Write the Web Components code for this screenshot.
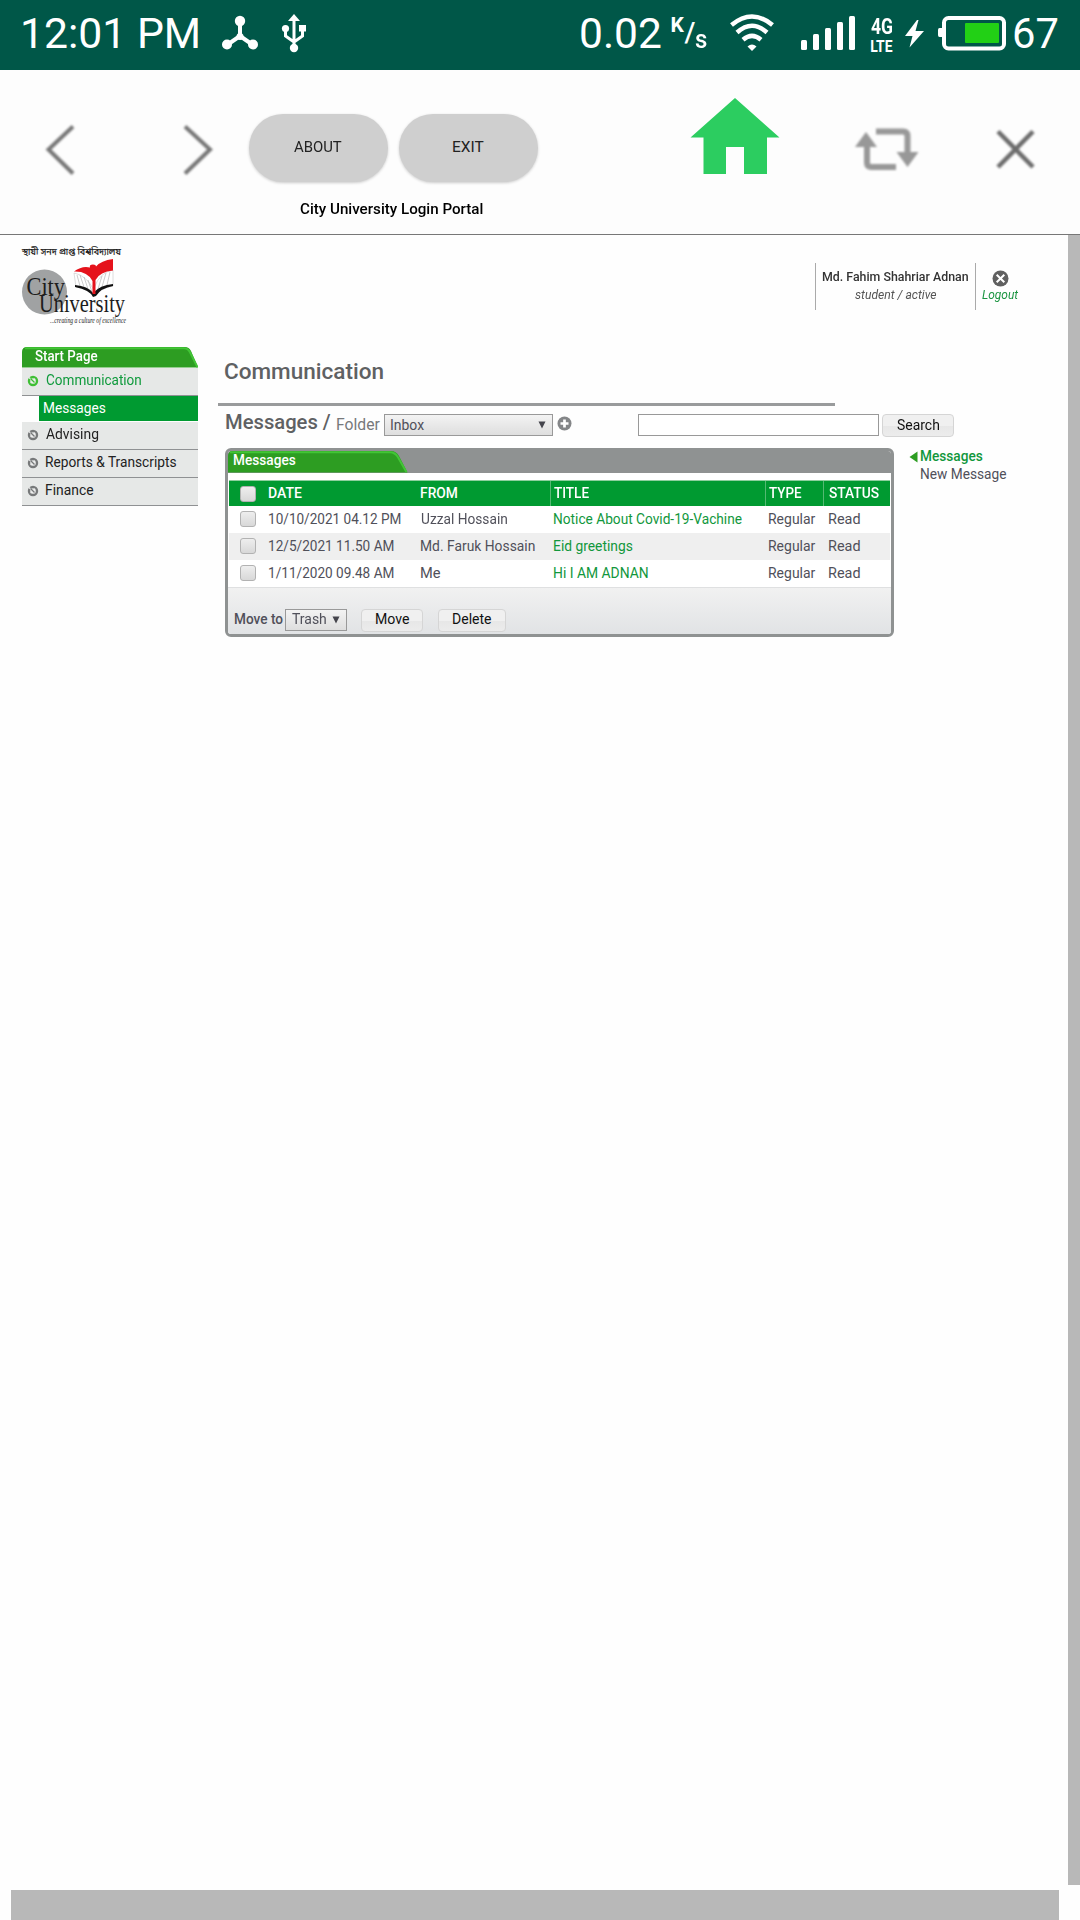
<!DOCTYPE html>
<html lang="en">
<head>
<meta charset="utf-8">
<title>City University Login Portal</title>
<style>
html,body{margin:0;padding:0;background:#fefefe}
body{width:1080px;height:1920px;overflow:hidden;font-family:Roboto,"Liberation Sans",sans-serif;color:#50505a}
</style>
</head>
<body>
<portal-app></portal-app>
<script>
const define=(name,markup,setup)=>{
  const t=document.createElement('template');
  t.innerHTML=markup;
  customElements.define(name,class extends HTMLElement{
    constructor(){super();this.attachShadow({mode:'open'}).append(t.content.cloneNode(true));}
    connectedCallback(){if(setup)setup(this,this.shadowRoot);}
  });
};
const pen=document.createElement('canvas').getContext('2d');

/* One line of text whose visible glyphs span exactly `w` pixels. */
define('fit-text',`<style>
:host{display:block;flex:none;white-space:nowrap;overflow:visible}
span{display:inline-block;transform-origin:0 50%;line-height:inherit;vertical-align:top}
</style><span><slot></slot></span>`,(el,root)=>{
  const w=+el.getAttribute('w');
  el.style.width=w+'px';
  el.style.fontSize=el.getAttribute('s')+'px';
  const lh=el.getAttribute('lh')||20;
  el.style.lineHeight=lh+'px';el.style.height=lh+'px';
  const cs=getComputedStyle(el);
  pen.font=`${cs.fontStyle} ${cs.fontWeight} ${cs.fontSize} ${cs.fontFamily}`;
  const m=pen.measureText(el.textContent.trim());
  const k=w/(m.actualBoundingBoxLeft+m.actualBoundingBoxRight);
  root.querySelector('span').style.transform=`translateX(${m.actualBoundingBoxLeft*k}px) scaleX(${k})`;
});

define('status-bar',`<style>
:host{display:flex;height:70px;box-sizing:border-box;padding-left:23px;background:#005748;color:#fff;align-items:flex-start}
svg{display:block;flex:none}
.net{display:flex;margin-left:264.5px;width:150px}
.rate{display:flex;margin-left:11px;font-weight:500}
.lte{display:flex;flex-direction:column;margin:18px 13px 0 0;gap:0;font-weight:700}
</style>
<fit-text w="175" s="42.5" lh="67">12:01 PM</fit-text>
<svg style="margin-left:22px" width="96" height="70" viewBox="220 0 96 70" fill="#fff" stroke="#fff">
<path d="M240 21v16.500M240 36l-13 9M240 36l13 9" stroke-width="4" fill="none"/><g stroke="none"><circle cx="240" cy="21" r="5.200"/><circle cx="227" cy="44.500" r="5"/><circle cx="253" cy="44.500" r="5"/><circle cx="240" cy="36.500" r="3.500"/>
<path d="M294 14l6 7h-12z"/><circle cx="294" cy="48" r="4.200"/><circle cx="285.500" cy="28.500" r="3.600"/><path d="M299 25h7v6.500h-7z"/></g>
<path d="M294 19v29M285.500 29v7l8.500 6M302.500 30v6l-8.500 6" fill="none" stroke-width="3"/></svg>
<div class="net"><fit-text w="80" s="42.5" lh="67">0.02</fit-text>
<div class="rate"><fit-text w="13" s="21" lh="50" style="font-weight:700">K</fit-text><fit-text w="11" s="28" lh="65">/</fit-text><fit-text w="12" s="26" lh="79" style="margin-left:-1px">s</fit-text></div></div>
<svg style="margin-left:-1px" width="141" height="70" viewBox="730 0 141 70" fill="none" stroke="#fff" stroke-width="4.500">
<path d="M731.500 25Q752 8 772.500 25M737 32.500Q752 19 767 32.500M743 39.800Q752 32 761 39.800"/><path d="M752 51l-4.500-4.500q4.500-4 9 0z" fill="#fff" stroke="none"/>
<g fill="#fff" stroke="none"><rect x="801" y="40" width="6" height="10" rx="1.500"/><rect x="813" y="34" width="6" height="16" rx="1.500"/><rect x="825" y="28" width="6" height="22" rx="1.500"/><rect x="837" y="22" width="6" height="28" rx="1.500"/><rect x="849" y="16" width="6" height="34" rx="1.500"/></g></svg>
<div class="lte"><fit-text w="21.5" s="21.5" lh="18">4G</fit-text><fit-text w="21.5" s="16" lh="21">LTE</fit-text></div>
<svg width="109" height="70" viewBox="905 0 109 70" fill="#fff"><path d="M917 20l-12 16h7.500l-3 11.500L924 31h-8.500l3-11z"/>
<rect x="944" y="18" width="60" height="30.500" rx="4.500" fill="none" stroke="#fff" stroke-width="4"/><path d="M942 28h-2.500q-1.500 0-1.500 2v5q0 2 1.500 2h2.500z"/><rect x="965" y="23" width="34" height="20" rx="1" fill="#22d015"/></svg>
<fit-text w="44" s="42.5" lh="67">67</fit-text>`);

define('pill-button',`<style>
:host{display:flex;justify-content:center;width:139px;height:68.5px;border-radius:34.5px;background:#cfcfcf;box-shadow:0 1px 3px #0003;color:#222;box-sizing:border-box;padding-top:23.5px}
</style><slot></slot>`);

define('app-toolbar',`<style>
:host{display:flex;height:165px;box-sizing:border-box;border-bottom:1.500px solid #777;background:#fdfdfd;color:#000}
svg{display:block;flex:none}
.mid{width:290px;padding-top:43.5px;display:flex;flex-direction:column;align-items:flex-start}
.btns{display:flex;gap:11px}
.title{margin:15.5px 0 0 51.5px;font-weight:500}
</style>
<svg width="248.500" height="164" viewBox="0 70 248.500 164" fill="none" stroke="#777" stroke-width="4"><g style="filter:blur(.8px)"><path d="M73 126.500L48.500 149.500 73 173.500M185 126.500l25 23L185 173.500"/></g></svg>
<div class="mid"><div class="btns"><pill-button><fit-text w="47.5" s="15.5" style="margin-left:-1px">ABOUT</fit-text></pill-button><pill-button><fit-text w="30.5" s="15.5">EXIT</fit-text></pill-button></div>
<fit-text class="title" w="182.5" s="15.2" lh="22">City University Login Portal</fit-text></div>
<svg width="541" height="164" viewBox="539 70 541 164"><path d="M735 98l44.500 39.500H767V174h-23v-27h-18v27h-22.500v-36.500h-13z" fill="#2ccd60"/>
<g style="filter:blur(1px)"><g fill="none" stroke="#989898" stroke-width="6"><path d="M876 131.500h27q4.500 0 4.500 4.500V155M896 167h-24.500q-4.500 0-4.500-4.500V143"/></g><path d="M866 132l11 15h-22zM907.500 167l-11-15h22z" fill="#989898"/></g>
<path style="filter:blur(.8px)" d="M998 131.500l35 35.500M1033 131.500L998 167" stroke="#6c6c6c" stroke-width="4.500"/></svg>`);

define('uni-logo',`<style>
:host{display:block;width:110px;height:87px}svg{display:block;overflow:visible}
text{font-family:"Liberation Serif",serif;fill:#1c1c1c}
</style><svg width="110" height="87" viewBox="20 243 110 87">
<text x="22" y="254.500" textLength="99" lengthAdjust="spacingAndGlyphs" style="font:9.500px 'Noto Sans Bengali','Noto Sans',sans-serif" stroke="#1c1c1c" stroke-width=".2">স্থায়ী সনদ প্রাপ্ত বিশ্ববিদ্যালয়</text>
<circle cx="44.500" cy="292" r="22.500" fill="#a0a2a3"/>
<path d="M74 273q12 2 20 17l-1 6q-6-8-17-9zM113 270q-13 2-19 18v8q7-8 19-10z" fill="#fff" stroke="#bbb" stroke-width=".5"/>
<path d="M77 275l3 11M80 275l4 12M84 277l4 12M88 280l4 12M110 272l-3 13M106 273l-4 14M102 276l-4 13" stroke="#aaa" stroke-width=".6"/>
<path d="M75 285q13 1 18 8 7-8 20-9v2q-12 2-17 10l-3 1q-3-7-18-10z" fill="#111"/>
<path d="M74 271.500q8-6 16-4-1-3 3-3 3 0 3 2 5-6 17-7.500v11.500q-13 1-17.500 9.500V294H92.500V281q-5-10-18.500-9.500z" fill="#e5121b"/>
<text x="26.500" y="295" font-size="26" textLength="38.500" lengthAdjust="spacingAndGlyphs">City</text>
<text x="39" y="312" font-size="26" textLength="86" lengthAdjust="spacingAndGlyphs">University</text>
<text x="50" y="322.500" font-size="7.500" font-style="italic" textLength="76" lengthAdjust="spacingAndGlyphs">...creating a culture of excellence</text>
</svg>`);

define('user-panel',`<style>
:host{display:flex;height:47px;color:#333}
.who,.out{display:flex;flex-direction:column;align-items:center;border-left:1.500px solid #aaa;box-sizing:border-box}
.who{width:160px;padding:4.5px 0 0 1px}
.who>:first-child{font-weight:500}
i{font-style:italic;color:#555}
.out{padding:6.5px 0 0 6px;align-items:flex-start}
svg{margin:0 0 0 10.5px;display:block}
.out i{color:#1a9440}
</style>
<div class="who"><fit-text w="146.500" s="12.700" lh="18">Md. Fahim Shahriar Adnan</fit-text><i><fit-text w="82" s="12.700" lh="18">student / active</fit-text></i></div>
<div class="out"><svg width="17" height="17" viewBox="0 0 17 17"><circle cx="8.500" cy="8.500" r="8" fill="#606060"/><path d="M4.700 4.700l7.600 7.600M12.300 4.700l-7.600 7.600" stroke="#fff" stroke-width="2"/></svg><i style="margin-top:-1px"><fit-text w="37" s="12.700" lh="18">Logout</fit-text></i></div>`);

define('nav-item',`<style>
:host{display:flex;height:28px;box-sizing:border-box;background:#e6e8e7;border-bottom:1.500px solid #8f9193;color:#222;align-items:flex-start;padding-left:5px}
:host([on]){color:#0f9a3c;--dot:#3fbf35}
svg{margin:7.5px 6.5px 0 0;flex:none}
::slotted(fit-text){margin-top:2px}
</style><svg width="12" height="12" viewBox="0 0 12 12"><circle cx="6" cy="6" r="4" fill="none" stroke="var(--dot,#77797a)" stroke-width="2.400"/><path d="M2 2.500L7 7M7.500 3.500v4h-4" stroke="#eee" stroke-width="1.300" fill="none"/><path d="M3.500 3.500l4 4" stroke="var(--dot,#77797a)" stroke-width="1.300"/></svg><slot></slot>`);

define('side-nav',`<style>
:host{display:flex;flex-direction:column;width:176px}
.head{height:20.5px;display:grid;color:#fff;font-weight:500}
.head>*{grid-area:1/1}
.head fit-text{margin:-1px 0 0 13px}
.sub{margin:0 0 1px 16.5px;background:#009a31;color:#fff;height:25px;padding:2px 0 0 5.5px;box-sizing:border-box}
</style>
<div class="head"><svg width="176" height="20.500" viewBox="0 0 176 20.500"><path d="M0 20.500V5q0-5 5-5H163q4 0 6 4l7 16.500z" fill="#2d9d22"/><path d="M3 1.200H162q4 0 6 4l7.500 15" fill="none" stroke="#42c536" stroke-width="2"/></svg><fit-text w="63" s="14" lh="20">Start Page</fit-text></div>
<nav-item on><fit-text w="95" s="14.2">Communication</fit-text></nav-item>
<div class="sub"><fit-text w="61.5" s="14.2">Messages</fit-text></div>
<nav-item><fit-text w="52" s="14.2">Advising</fit-text></nav-item>
<nav-item><fit-text w="130.5" s="14.2">Reports &amp; Transcripts</fit-text></nav-item>
<nav-item><fit-text w="47" s="14.2">Finance</fit-text></nav-item>`);

define('drop-box',`<style>
:host{display:flex;justify-content:space-between;height:22px;box-sizing:border-box;border:1.500px solid #999;background:linear-gradient(#f3f3f3,#dedede);padding:0 6.5px 0 6px;color:#50505a}
svg{margin-top:6px;flex:none}
</style><slot></slot><svg width="8" height="8"><path d="M.5 .5h7l-3.500 7z" fill="#44444c"/></svg>`);

define('soft-button',`<style>
:host{display:flex;justify-content:center;height:23px;box-sizing:border-box;border:1px solid #d5d5d5;border-radius:4px;background:linear-gradient(#f0f0f0 0 50%,#e7e7e7 52%,#ececec);color:#111}
</style><slot></slot>`);

define('check-box',`<style>
:host{display:block;width:16px;height:16px;box-sizing:border-box;border:1.500px solid #b2b2b2;border-radius:3px;background:linear-gradient(#eee,#d8d8d8)}
</style>`);

/* One table line: checkbox, date, sender, title, type and status. */
define('message-row',`<style>
:host{display:grid;grid-template-columns:40.500px 151.500px 129px 215px 58px 1fr;height:27px;background:#fff}
:host([alt]){background:#efefef}
:host([head]){height:25px;background:#009a31;color:#fff;font-weight:500;box-shadow:0 -1px #8dcf9e}
.c{padding-top:3px;box-sizing:border-box}
:host([head]) .c{padding-top:1.500px}
:host([head]) .l{border-left:1px solid #55b973}
check-box{margin:5px 0 0 11.500px}
.l{border-left:1px solid transparent;padding-left:3px}
.s{padding-left:5.5px}
.t{color:#11973c}
:host([head]) .t{color:#fff}
</style><div><check-box></check-box></div><div class="c"><slot name="date"></slot></div><div class="c"><slot name="from"></slot></div><div class="c l t"><slot name="title"></slot></div><div class="c l"><slot name="type"></slot></div><div class="c l s"><slot name="status"></slot></div>`);

define('message-panel',`<style>
:host{display:flex;flex-direction:column;width:669.5px;height:189px;box-sizing:border-box;border:solid #8f9292;border-width:3px 3.500px;border-radius:6px;background:#fff;overflow:hidden}
.tab{height:21.500px;display:grid;background:#8f9292;color:#fff;font-weight:500;flex:none}
.tab>*{grid-area:1/1}
.tab fit-text{margin:-1px 0 0 6.5px}
.rows{margin-top:8.500px;display:flex;flex-direction:column;padding:0 1px}
.foot{flex:1;border-top:1px solid #dfe0e1;background:linear-gradient(#f1f1f1,#e1e3e5);display:flex;align-items:flex-start;padding:20.500px 0 0 7px}
.foot b{font-weight:500}
</style>
<div class="tab"><svg width="180" height="21.500" viewBox="0 0 180 21.500"><path d="M0 21.500V5Q0 0 5 0H163q5 0 8 5l8.500 16.500z" fill="#2d9d22"/><path d="M2 1.200H162q5 0 8 5l8.500 15" fill="none" stroke="#42c536" stroke-width="2"/></svg><fit-text w="61.5" s="14" lh="20">Messages</fit-text></div>
<div class="rows">
<message-row head><fit-text slot="date" w="33" s="14.2">DATE</fit-text><fit-text slot="from" w="36.5" s="14.2">FROM</fit-text><fit-text slot="title" w="35" s="14.2">TITLE</fit-text><fit-text slot="type" w="32.5" s="14.2">TYPE</fit-text><fit-text slot="status" w="50.5" s="14.2">STATUS</fit-text></message-row>
<message-row><fit-text slot="date" w="132" s="14.2">10/10/2021 04.12 PM</fit-text><fit-text slot="from" w="86" s="14.2">Uzzal Hossain</fit-text><fit-text slot="title" w="187.5" s="14.2">Notice About Covid-19-Vachine</fit-text><fit-text slot="type" w="46.5" s="14.2">Regular</fit-text><fit-text slot="status" w="30.5" s="14.2">Read</fit-text></message-row>
<message-row alt><fit-text slot="date" w="125" s="14.2">12/5/2021 11.50 AM</fit-text><fit-text slot="from" w="113.5" s="14.2">Md. Faruk Hossain</fit-text><fit-text slot="title" w="78.5" s="14.2">Eid greetings</fit-text><fit-text slot="type" w="46.5" s="14.2">Regular</fit-text><fit-text slot="status" w="30.5" s="14.2">Read</fit-text></message-row>
<message-row><fit-text slot="date" w="125" s="14.2">1/11/2020 09.48 AM</fit-text><fit-text slot="from" w="19" s="14.2">Me</fit-text><fit-text slot="title" w="93.5" s="14.2">Hi I AM ADNAN</fit-text><fit-text slot="type" w="46.5" s="14.2">Regular</fit-text><fit-text slot="status" w="30.5" s="14.2">Read</fit-text></message-row>
</div>
<div class="foot"><b><fit-text w="48" s="14.2">Move to</fit-text></b>
<drop-box style="width:62px;margin-left:2.5px"><fit-text w="34" s="14.2" lh="19">Trash</fit-text></drop-box>
<soft-button style="width:62px;margin-left:14px"><fit-text w="33" s="14.2" lh="19" style="margin-left:1px">Move</fit-text></soft-button>
<soft-button style="width:68px;margin-left:15px"><fit-text w="38" s="14.2" lh="19">Delete</fit-text></soft-button></div>`);

define('portal-app',`<style>
:host{display:flex;flex-direction:column;width:1080px;height:1920px}
.view{display:flex;height:1650px}
.page{width:1068px;display:flex;flex-direction:column;background:#fefefe}
.vbar{width:12px;background:#b8b8b8}
.hbar{width:1048px;height:30px;margin:5px 0 0 11px;background:#b8b8b8}
.top{display:flex;height:112px;padding:8px 0 0 20px;box-sizing:border-box}
user-panel{margin:20px 0 0 684.5px}
.body{display:flex;padding-left:22px}
main{margin-left:20px;width:850px;display:flex;flex-direction:column}
h1,h2{margin:0;font-weight:500;color:#5f6163}
h1{margin:8.5px 0 0 7px}
hr{border:0;margin:17px 0 0 0;width:617px;height:3px;background:#999b9c;flex:none}
.bar{display:flex;height:42.500px;padding-left:7.5px;align-items:flex-start}
.bar>*{flex:none;box-sizing:border-box}
.input{width:241px;height:22px;border:1.500px solid #999;background:#fff;margin:8.500px 3px 0 66px}
.cols{display:flex;padding-left:6.500px}
.links{padding-left:15px;display:grid;grid-template-columns:12px auto;align-content:start}
.links svg{margin-top:3px}
.links b{font-weight:500;color:#11973c}
</style>
<status-bar></status-bar>
<app-toolbar></app-toolbar>
<div class="view"><div class="page">
<div class="top"><uni-logo></uni-logo><user-panel></user-panel></div>
<div class="body"><side-nav></side-nav>
<main><h1><fit-text w="158.500" s="22.500" lh="30">Communication</fit-text></h1><hr>
<div class="bar"><h2><fit-text w="104.500" s="21" lh="33">Messages /</fit-text></h2>
<fit-text w="43.500" s="15.800" lh="38" style="margin-left:6.500px;color:#77797b">Folder</fit-text>
<drop-box style="width:169px;margin:8.500px 0 0 4px"><fit-text w="33" s="14.200" lh="20">Inbox</fit-text></drop-box>
<svg style="margin:10.500px 0 0 4px" width="15" height="15" viewBox="0 0 15 15"><circle cx="7.500" cy="7.500" r="7" fill="#848688"/><path d="M7.500 3.500v8M3.500 7.500h8" stroke="#fff" stroke-width="2.700"/></svg>
<div class="input"></div>
<soft-button style="width:72px;margin-top:8.500px"><fit-text w="42" s="14.200" lh="20">Search</fit-text></soft-button></div>
<div class="cols"><message-panel></message-panel><div class="links"><svg width="9" height="12"><path d="M8.500 .5v11L.5 6z" fill="#2d9d22"/></svg><b><fit-text w="61.500" s="14.200" lh="17">Messages</fit-text></b><span></span><fit-text w="85" s="14.200" lh="18">New Message</fit-text></div></div>
</main></div>
</div><div class="vbar"></div></div>
<div class="hbar"></div>`);
</script>
</body>
</html>
